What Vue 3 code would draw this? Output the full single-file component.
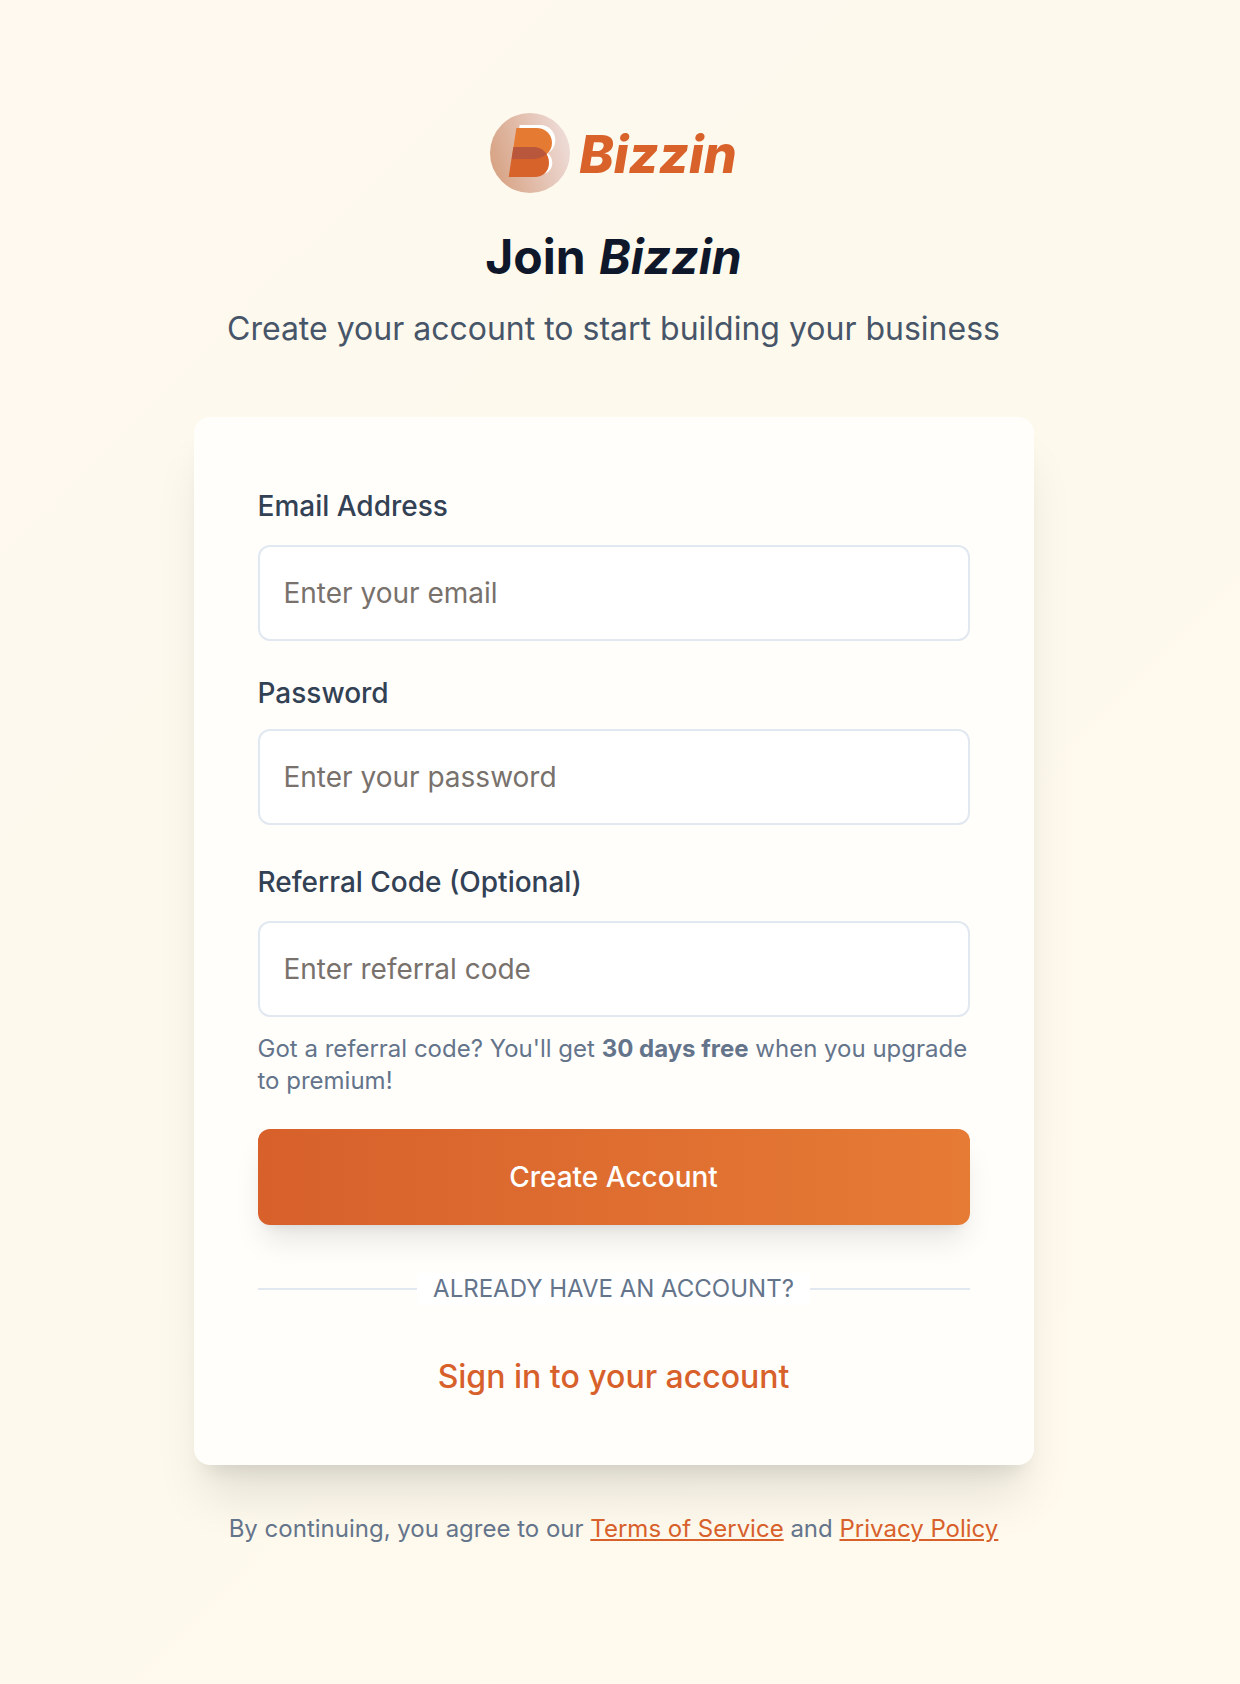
<script setup>
import { ref } from 'vue'

const email = ref('')
const password = ref('')
const referral = ref('')
</script>

<template>
  <main class="page">
    <div class="column">
      <header class="header">
        <div class="brand">
          <svg class="mark" viewBox="0 0 240 240" aria-hidden="true">
            <defs>
              <linearGradient id="disc" x1="0" y1="0.65" x2="1" y2="0.35">
                <stop offset="0" stop-color="#d7a283" />
                <stop offset="1" stop-color="#eedcd8" />
              </linearGradient>
              <clipPath id="upper">
                <path d="M79 45H139C166 45 186 64 186 90C186 116 163 139 118 139H65Z" />
              </clipPath>
            </defs>
            <circle cx="120" cy="120" r="120" fill="url(#disc)" />
            <path d="M89 36H150C177 36 196 56 196 82C196 99 187 113 173 121C182 129 187 138 187 150C187 166 176 181 158 183H66Z" fill="#fff" />
            <path d="M79 45H139C166 45 186 64 186 90C186 116 163 139 118 139H65Z" fill="#e57b33" />
            <path d="M70 102H128C157 102 177 122 177 149C177 175 159 192 134 192H56Z" fill="#d7622a" />
            <path d="M70 102H128C157 102 177 122 177 149C177 175 159 192 134 192H56Z" fill="#b8573c" clip-path="url(#upper)" />
          </svg>
          <span class="wordmark">Bizzin</span>
        </div>
        <h1>Join <em>Bizzin</em></h1>
        <p class="subtitle">Create your account to start building your business</p>
      </header>

      <section class="card">
        <form @submit.prevent>
          <div class="field">
            <label for="email">Email Address</label>
            <input id="email" v-model="email" type="email" placeholder="Enter your email" />
          </div>
          <div class="field compact">
            <label for="password">Password</label>
            <input id="password" v-model="password" type="password" placeholder="Enter your password" />
          </div>
          <div class="field">
            <label for="referral">Referral Code (Optional)</label>
            <input id="referral" v-model="referral" type="text" placeholder="Enter referral code" />
            <p class="hint">Got a referral code? You'll get <strong>30 days free</strong> when you upgrade to premium!</p>
          </div>
          <button type="submit">Create Account</button>
        </form>
        <div class="divider"><span>Already have an account?</span></div>
        <a class="signin" href="#">Sign in to your account</a>
      </section>

      <p class="legal">
        By continuing, you agree to our <a href="#">Terms of Service</a> and <a href="#">Privacy Policy</a>
      </p>
    </div>
  </main>
</template>

<style>
body {
  margin: 0;
}
</style>

<style scoped>
.page {
  box-sizing: border-box;
  min-height: 100vh;
  padding: 113px 29px 96px 16px;
  background: linear-gradient(135deg, #fff9ef, #fdf9ec 50%, #fffaed);
  font-family: Inter, "Liberation Sans", sans-serif;
  color: #334155;
}
.column {
  max-width: 840px;
  margin: 0 auto;
}
.header {
  display: flex;
  flex-direction: column;
  align-items: center;
  margin-bottom: 64px;
  text-align: center;
}
.brand {
  display: flex;
  align-items: center;
  gap: 9px;
  margin-bottom: 32px;
}
.mark {
  display: block;
  width: 80px;
  height: 80px;
}
.wordmark {
  padding-top: 4px;
  font-size: 52px;
  line-height: 76px;
  font-weight: 800;
  font-style: italic;
  color: #d9622b;
}
h1 {
  margin: 0 0 16px;
  font-size: 48px;
  line-height: 64px;
  font-weight: 700;
  color: #0f172a;
}
h1 em {
  margin-left: 2px;
}
.subtitle {
  margin: 0;
  font-size: 32px;
  line-height: 48px;
  color: #475569;
}
.card {
  padding: 64px;
  border-radius: 16px;
  background: #fffefb;
  box-shadow: 0 40px 50px -10px rgba(0, 0, 0, 0.1), 0 16px 20px -12px rgba(0, 0, 0, 0.1);
}
form {
  display: flex;
  flex-direction: column;
  gap: 32px;
}
.field {
  display: flex;
  flex-direction: column;
  gap: 16px;
}
label {
  padding-top: 2px;
  font-size: 28px;
  line-height: 46px;
  font-weight: 500;
}
.compact label {
  padding-top: 0;
  line-height: 40px;
}
input {
  box-sizing: border-box;
  width: 100%;
  height: 96px;
  padding: 0 24px;
  border: 2px solid #e2e8f0;
  border-radius: 12px;
  background: #fff;
  font: inherit;
  font-size: 28px;
  color: #0f172a;
}
input::placeholder {
  color: #78716c;
  opacity: 1;
}
.hint,
.legal {
  margin: 0;
  font-size: 24px;
  line-height: 32px;
  color: #64748b;
}
button {
  height: 96px;
  border: 0;
  border-radius: 12px;
  background: linear-gradient(90deg, #d7602b, #e67b35);
  box-shadow: 0 20px 30px -6px rgba(0, 0, 0, 0.1), 0 8px 12px -8px rgba(0, 0, 0, 0.1);
  font: inherit;
  font-size: 28px;
  font-weight: 500;
  color: #fff;
  cursor: pointer;
}
.divider {
  display: flex;
  align-items: center;
  margin: 48px 0;
  font-size: 24px;
  line-height: 32px;
  color: #64748b;
  text-transform: uppercase;
}
.divider::before,
.divider::after {
  content: "";
  flex: 1;
  height: 2px;
  background: #e2e8f0;
}
.divider span {
  padding: 0 16px;
  background: #fff;
}
.signin {
  display: block;
  font-size: 32px;
  line-height: 48px;
  font-weight: 500;
  text-align: center;
  text-decoration: none;
  color: #d7602b;
}
.legal {
  margin-top: 48px;
  text-align: center;
}
.legal a {
  color: #d7602b;
}
</style>
